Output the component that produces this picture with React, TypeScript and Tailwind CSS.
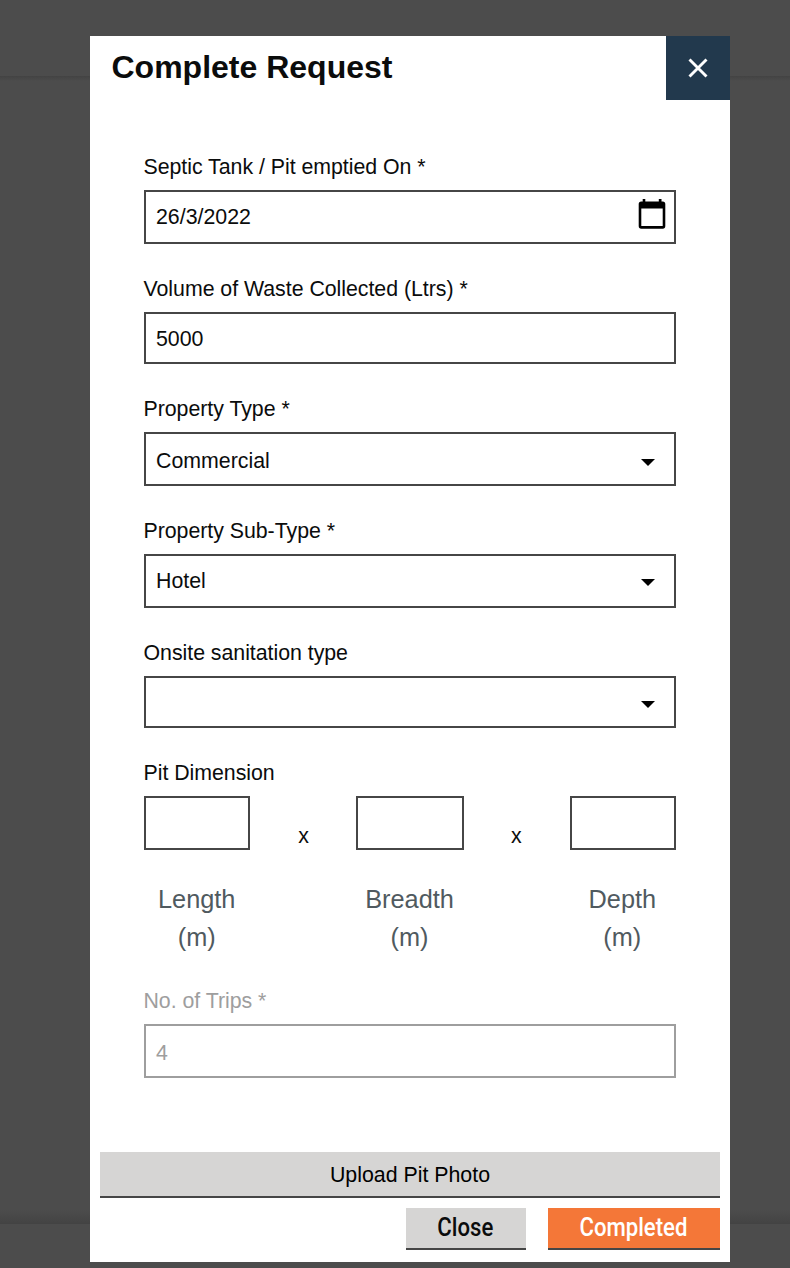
import type { ReactNode } from "react";

function Field({ label, children }: { label: string; children: ReactNode }) {
  return (
    <div>
      <div className="-ml-[0.5px] flex h-[46px] items-center tracking-[-0.03px] whitespace-nowrap">{label}</div>
      {children}
    </div>
  );
}

function Caret({ className }: { className: string }) {
  return (
    <svg className={className} width="14" height="7" viewBox="0 0 14 7">
      <path d="M0 0h14L7 7z" fill="#000" />
    </svg>
  );
}

function Dimension({ name, wide = false }: { name: string; wide?: boolean }) {
  return (
    <div className="flex flex-col items-center">
      <div className={`h-[54px] shrink-0 border-2 border-[#464646] ${wide ? "w-[108px]" : "w-full"}`} />
      <div className="mt-[30px] pr-px text-center text-[25.33px] leading-[38px] text-[#505a5f]">
        {name}
        <br />
        (m)
      </div>
    </div>
  );
}

function CalendarIcon() {
  return (
    <svg className="mr-[8px] -mt-[6px]" width="28" height="30" viewBox="0 0 28 30">
      <path
        d="M24.700 2.500h-1.200V0h-2.700v2.500H7.300V0H4.700v2.500H3.300A2.600 2.600 0 0 0 .7 5.100v22A2.600 2.600 0 0 0 3.300 29.700h21.400a2.600 2.600 0 0 0 2.600-2.600v-22a2.600 2.600 0 0 0-2.600-2.600zm0 24.500H3.300V9.500h21.400z"
        fill="#000"
      />
    </svg>
  );
}

export default function App() {
  return (
    <div className="relative flex h-[1268px] w-[790px] flex-col overflow-hidden bg-[#4c4c4c] font-['Liberation_Sans',Arial,sans-serif] text-[#0b0c0c]">
      <div className="h-[76px]" />
      <div className="h-[5px] bg-linear-to-b from-[#434343] to-[#4c4c4c]" />
      <div className="grow" />
      <div className="h-[14px] bg-linear-to-b from-[#4c4c4c] to-[#434343]" />
      <div className="h-[44px]" />

      <div className="absolute top-[36px] left-[90px] flex h-[1226px] w-[640px] flex-col bg-white">
        <header className="flex h-16 justify-between">
          <h1 className="pl-[21.5px] pt-[11px] text-[32px] leading-[40px] font-bold whitespace-nowrap">Complete Request</h1>
          <button className="flex size-16 items-center justify-center bg-[#22394d]">
            <svg width="20" height="20" viewBox="0 0 20 20">
              <path d="M1.500 1.500l17 17M18.500 1.500l-17 17" stroke="#fff" strokeWidth="2.900" />
            </svg>
          </button>
        </header>

        <div className="mt-11 flex flex-col gap-[22px] px-[54px] text-[21.33px] leading-[26px]">
          <Field label="Septic Tank / Pit emptied On *">
            <div className="flex h-[54px] items-center justify-between border-2 border-[#464646] pl-[10px]">
              <span>26/3/2022</span>
              <CalendarIcon />
            </div>
          </Field>
          <Field label="Volume of Waste Collected (Ltrs) *">
            <div className="flex h-[52px] items-center border-2 border-[#464646] pt-[2px] pl-[10px]">
              <span>5000</span>
            </div>
          </Field>
          <Field label="Property Type *">
            <div className="flex h-[54px] items-center justify-between border-2 border-[#464646] pt-[4px] pr-[19px] pl-[10px]">
              <span>Commercial</span>
              <Caret className="mt-[3px]" />
            </div>
          </Field>
          <Field label="Property Sub-Type *">
            <div className="flex h-[54px] items-center justify-between border-2 border-[#464646] pr-[19px] pl-[10px]">
              <span>Hotel</span>
              <Caret className="mt-[3px]" />
            </div>
          </Field>
          <Field label="Onsite sanitation type">
            <div className="flex h-[52px] items-center justify-end border-2 border-[#464646] pr-[19px]">
              <Caret className="mt-[5px]" />
            </div>
          </Field>
          <Field label="Pit Dimension">
            <div className="grid grid-cols-5">
              <Dimension name="Length" />
              <div className="pt-[27px] text-center">x</div>
              <Dimension name="Breadth" wide />
              <div className="pt-[27px] text-center">x</div>
              <Dimension name="Depth" />
            </div>
          </Field>
          <div className="text-[#9e9e9e]">
            <Field label="No. of Trips *">
              <div className="flex h-[54px] items-center border-2 border-[#9e9e9e] pt-[4px] pl-[10px]">
                <span>4</span>
              </div>
            </Field>
          </div>
        </div>

        <div className="mt-[74px] flex flex-col gap-[10px] px-[10px]">
          <button className="flex h-[46px] items-center justify-center border-b-2 border-[#464646] bg-[#d6d5d4] pt-[2px] text-[21.33px] leading-[26px] text-black">
            Upload Pit Photo
          </button>
          <div className="flex justify-end gap-[22px] font-['Roboto',sans-serif] text-[25.6px] leading-[30px] font-medium">
            <button className="flex h-[42px] w-[120px] items-center justify-center border-b-2 border-[#464646] bg-[#d6d5d4] pr-px pb-[2px]">
              <span className="scale-x-[0.865]">Close</span>
            </button>
            <button className="flex h-[42px] w-[172px] items-center justify-center border-b-2 border-[#464646] bg-[#f47738] pr-px pb-[2px] text-white">
              <span className="scale-x-[0.865]">Completed</span>
            </button>
          </div>
        </div>
      </div>
    </div>
  );
}
